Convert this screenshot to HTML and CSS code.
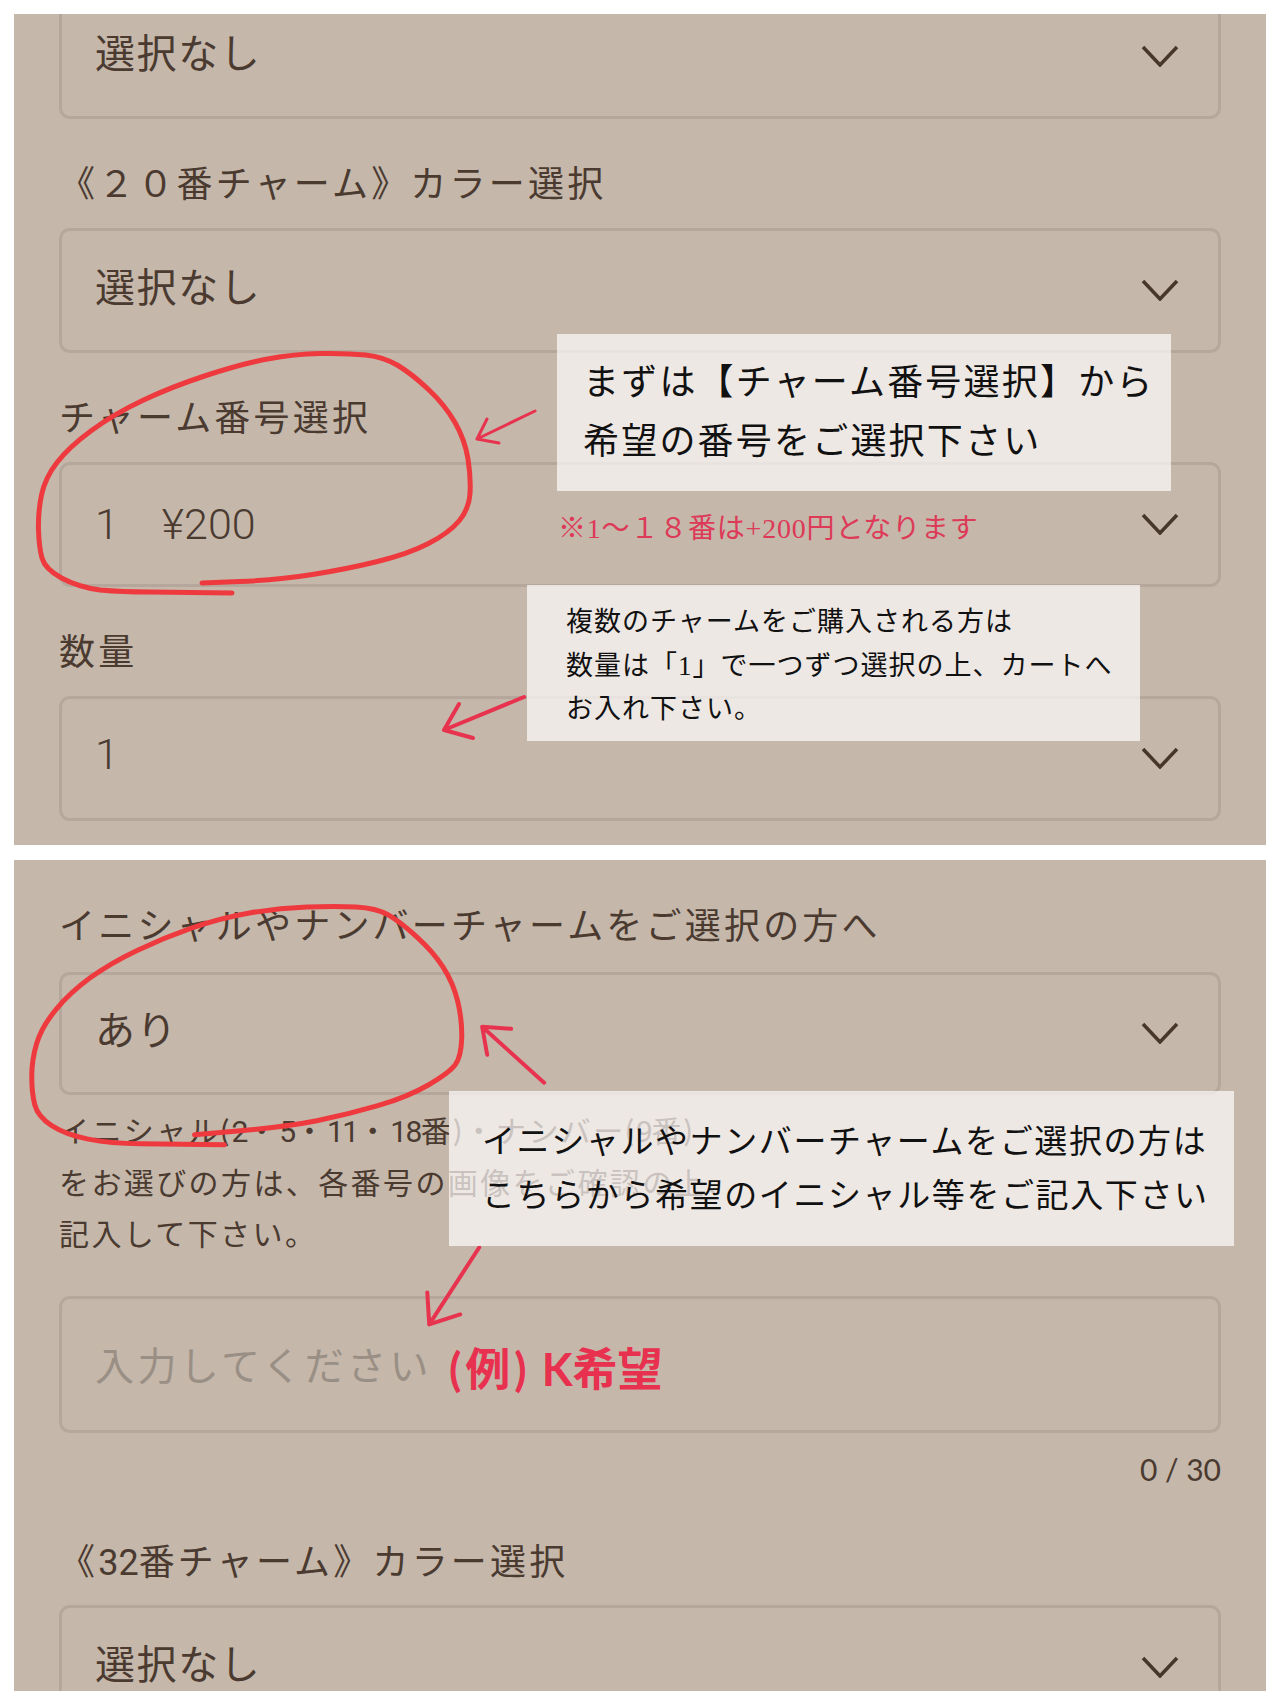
FILE: index.html
```html
<!DOCTYPE html>
<html lang="ja">
<head>
    <meta charset="UTF-8">
    <meta name="viewport" content="width=device-width, initial-scale=1.0">
    <title>チャーム番号選択</title>
    <link rel="stylesheet" href="styles.css">
</head>
<body>
    <section class="panel">
        <div class="panel-body panel-body-scrolled">
            <div class="field">
                <div class="select">
                    <span class="value">選択なし</span>
                    <svg class="chevron" viewBox="0 0 38 22"><path d="M2 2 L19 20 L36 2"/></svg>
                </div>
            </div>
            <div class="field">
                <p class="label">《２０番チャーム》カラー選択</p>
                <div class="select">
                    <span class="value">選択なし</span>
                    <svg class="chevron" viewBox="0 0 38 22"><path d="M2 2 L19 20 L36 2"/></svg>
                </div>
            </div>
            <div class="field">
                <p class="label">チャーム番号選択</p>
                <div class="select">
                    <span class="value value-num">1　¥200</span>
                    <svg class="chevron" viewBox="0 0 38 22"><path d="M2 2 L19 20 L36 2"/></svg>
                </div>
            </div>
            <div class="field">
                <p class="label">数量</p>
                <div class="select">
                    <span class="value value-num">1</span>
                    <svg class="chevron" viewBox="0 0 38 22"><path d="M2 2 L19 20 L36 2"/></svg>
                </div>
            </div>
        </div>

        <svg class="ink" viewBox="14 14 1252 831">
            <path class="circle" d="M232 593 L150 592 Q122 592 100 590 Q78 587 61.5 578 Q45 569 42 558 Q39 547 38.5 529.5 Q38 512 41.5 495 Q45 478 57 462.5 Q69 447 91.5 430.5 Q114 414 142.5 400.5 Q171 387 206 375.5 Q241 364 267.5 359 Q294 354 320.5 353.5 Q347 353 365.5 355 Q384 357 398 365.5 Q412 374 428.5 389.5 Q445 405 455 422.5 Q465 440 468 459 Q471 478 470 493.5 Q469 509 459 521 Q449 533 428.5 543.5 Q408 554 377.5 561.5 Q347 569 312.5 574.5 Q278 580 240 581.5 L202 583"/>
            <path class="arrow arrow-thin" d="M535 411 L477 439 M487 419 L477 439 L499 443"/>
            <path class="arrow" d="M524 697 L444 730 M459 704 L444 730 L473 738"/>
        </svg>

        <div class="note note-charm">まずは【チャーム番号選択】から<br>希望の番号をご選択下さい</div>
        <p class="red-note">※1～１８番は+200円となります</p>
        <div class="note note-qty">複数のチャームをご購入される方は<br>数量は「1」で一つずつ選択の上、カートへ<br>お入れ下さい。</div>
    </section>

    <section class="panel">
        <div class="panel-body panel-body-top">
            <p class="label">イニシャルやナンバーチャームをご選択の方へ</p>
            <div class="select select-short">
                <span class="value">あり</span>
                <svg class="chevron" viewBox="0 0 38 22"><path d="M2 2 L19 20 L36 2"/></svg>
            </div>
            <p class="help">イニシャル(<span class="num">2</span>・<span class="num">5</span>・<span class="num">11</span>・<span class="num">18</span>番)・ナンバー(<span class="num">9</span>番)<br>をお選びの方は、各番号の画像をご確認の上、<br>記入して下さい。</p>
            <input class="text-input" type="text" placeholder="入力してください">
            <p class="counter">0 / 30</p>
            <p class="label label-next">《<span class="num">32</span>番チャーム》カラー選択</p>
            <div class="select">
                <span class="value">選択なし</span>
                <svg class="chevron" viewBox="0 0 38 22"><path d="M2 2 L19 20 L36 2"/></svg>
            </div>
        </div>

        <svg class="ink" viewBox="14 860 1252 832">
            <path class="circle" d="M224 1145 L140 1144 Q110 1144 87.5 1139.5 Q65 1135 51 1126 Q37 1117 34 1105 Q31 1093 31 1076.5 Q31 1060 36 1043.5 Q41 1027 55 1010 Q69 993 89.5 978 Q110 963 136.5 950.5 Q163 938 191.5 928 Q220 918 249 913 Q278 908 306.5 907 Q335 906 355.5 907 Q376 908 388 915 Q400 922 416.5 937 Q433 952 443 967.5 Q453 983 457.5 1001.5 Q462 1020 461.5 1038.5 Q461 1057 455 1065 Q449 1073 428.5 1085 Q408 1097 377.5 1106 Q347 1115 316.5 1121 Q286 1127 240 1131 L194 1135"/>
            <path class="arrow" d="M544 1083 L482 1027 M511 1029 L482 1027 L487 1055"/>
            <path class="arrow" d="M479 1248 L429 1325 M427 1293 L429 1325 L460 1315"/>
        </svg>

        <div class="note note-initial">イニシャルやナンバーチャームをご選択の方は<br>こちらから希望のイニシャル等をご記入下さい</div>
        <p class="red-example"><span class="paren">(例)</span> K希望</p>
    </section>
</body>
</html>
```

FILE: styles.css
```css
body {
    margin: 0;
    padding: 14px;
    background-color: #ffffff;
    color: #4a3a30;
    font-family: 'Lato', 'Noto Sans CJK JP', sans-serif;
}
p {
    margin: 0;
}
.panel {
    position: relative;
    height: 831px;
    margin-bottom: 15px;
    overflow: hidden;
    background-color: #c5b7aa;
}
.panel-body {
    padding: 0 45px;
}
.panel-body-scrolled {
    margin-top: -20px;
}
.panel-body-top {
    padding-top: 40px;
}
.field {
    margin-bottom: 39px;
}
.label {
    height: 50px;
    margin-bottom: 20px;
    font-size: 36px;
    font-weight: 400;
    line-height: 50px;
    letter-spacing: 3.2px;
    white-space: nowrap;
}
.panel-body-top > .label {
    margin-bottom: 22px;
}
.panel-body-top > .label-next {
    margin-top: 47px;
    margin-bottom: 19px;
}
.num {
    font-family: 'Roboto', sans-serif;
    letter-spacing: 0;
}
.select {
    display: flex;
    align-items: center;
    justify-content: space-between;
    box-sizing: border-box;
    height: 125px;
    padding: 0 34px 0 33px;
    border: 3px solid #b5a79b;
    border-radius: 11px;
    font-size: 40px;
    font-weight: 400;
    letter-spacing: 1.6px;
}
.select-short {
    height: 123px;
}
.value {
    margin-bottom: 12px;
}
.value-num {
    margin-bottom: 10px;
    font-family: 'Roboto', 'Noto Sans CJK JP', sans-serif;
    font-size: 43px;
    font-weight: 300;
    letter-spacing: 0;
}
.chevron {
    width: 38px;
    height: 22px;
    margin-right: 5px;
    margin-bottom: 2px;
    fill: none;
    stroke: #46362c;
    stroke-width: 3.5;
}
.help {
    margin-top: 10px;
    font-size: 30px;
    font-weight: 400;
    line-height: 51px;
    letter-spacing: 2.4px;
    white-space: nowrap;
}
.help .num {
    letter-spacing: -1.5px;
}
.text-input {
    display: block;
    box-sizing: border-box;
    width: 100%;
    height: 137px;
    margin-top: 37px;
    padding: 0 33px;
    border: 3px solid #b5a79b;
    border-radius: 11px;
    background: transparent;
    font-family: 'Lato', 'Noto Sans CJK JP', sans-serif;
    font-size: 39px;
    font-weight: 400;
    letter-spacing: 3.4px;
}
.text-input::placeholder {
    color: #9a8f85;
}
.counter {
    margin-top: 16px;
    font-size: 30px;
    line-height: 40px;
    text-align: right;
    font-weight: 400;
}
.ink {
    position: absolute;
    top: 0;
    left: 0;
    width: 100%;
    height: 100%;
    fill: none;
    stroke-linecap: round;
    stroke-linejoin: round;
}
.circle {
    stroke: #ee3a3e;
    stroke-width: 5;
}
.arrow {
    stroke: #e8334f;
    stroke-width: 4;
}
.arrow-thin {
    stroke-width: 3;
}
.note {
    position: absolute;
    box-sizing: border-box;
    background-color: rgba(255, 252, 252, 0.7);
    color: #111;
    font-family: 'Liberation Serif', 'Noto Sans CJK JP', serif;
    white-space: nowrap;
}
.note-charm {
    top: 320px;
    left: 543px;
    width: 614px;
    height: 157px;
    padding: 20px 0 0 26px;
    font-size: 36px;
    line-height: 59px;
    letter-spacing: 2.2px;
}
.note-qty {
    top: 571px;
    left: 513px;
    width: 613px;
    height: 156px;
    padding: 16px 0 0 39px;
    font-size: 27px;
    line-height: 43.5px;
    letter-spacing: 1px;
}
.note-initial {
    top: 231px;
    left: 435px;
    width: 785px;
    height: 155px;
    padding: 24px 0 0 33px;
    font-size: 33px;
    line-height: 54px;
    letter-spacing: 1.6px;
}
.red-note {
    position: absolute;
    top: 495px;
    left: 544px;
    color: #dd3a58;
    font-family: 'Liberation Serif', 'Noto Sans CJK JP', serif;
    font-size: 28px;
    line-height: 40px;
    letter-spacing: 0.8px;
    white-space: nowrap;
}
.red-example {
    position: absolute;
    top: 479px;
    left: 435px;
    color: #e8304f;
    font-family: 'Lato', 'Noto Sans CJK JP', sans-serif;
    font-size: 45px;
    font-weight: 700;
    line-height: 60px;
    white-space: nowrap;
}
.paren {
    letter-spacing: 4px;
}
```
